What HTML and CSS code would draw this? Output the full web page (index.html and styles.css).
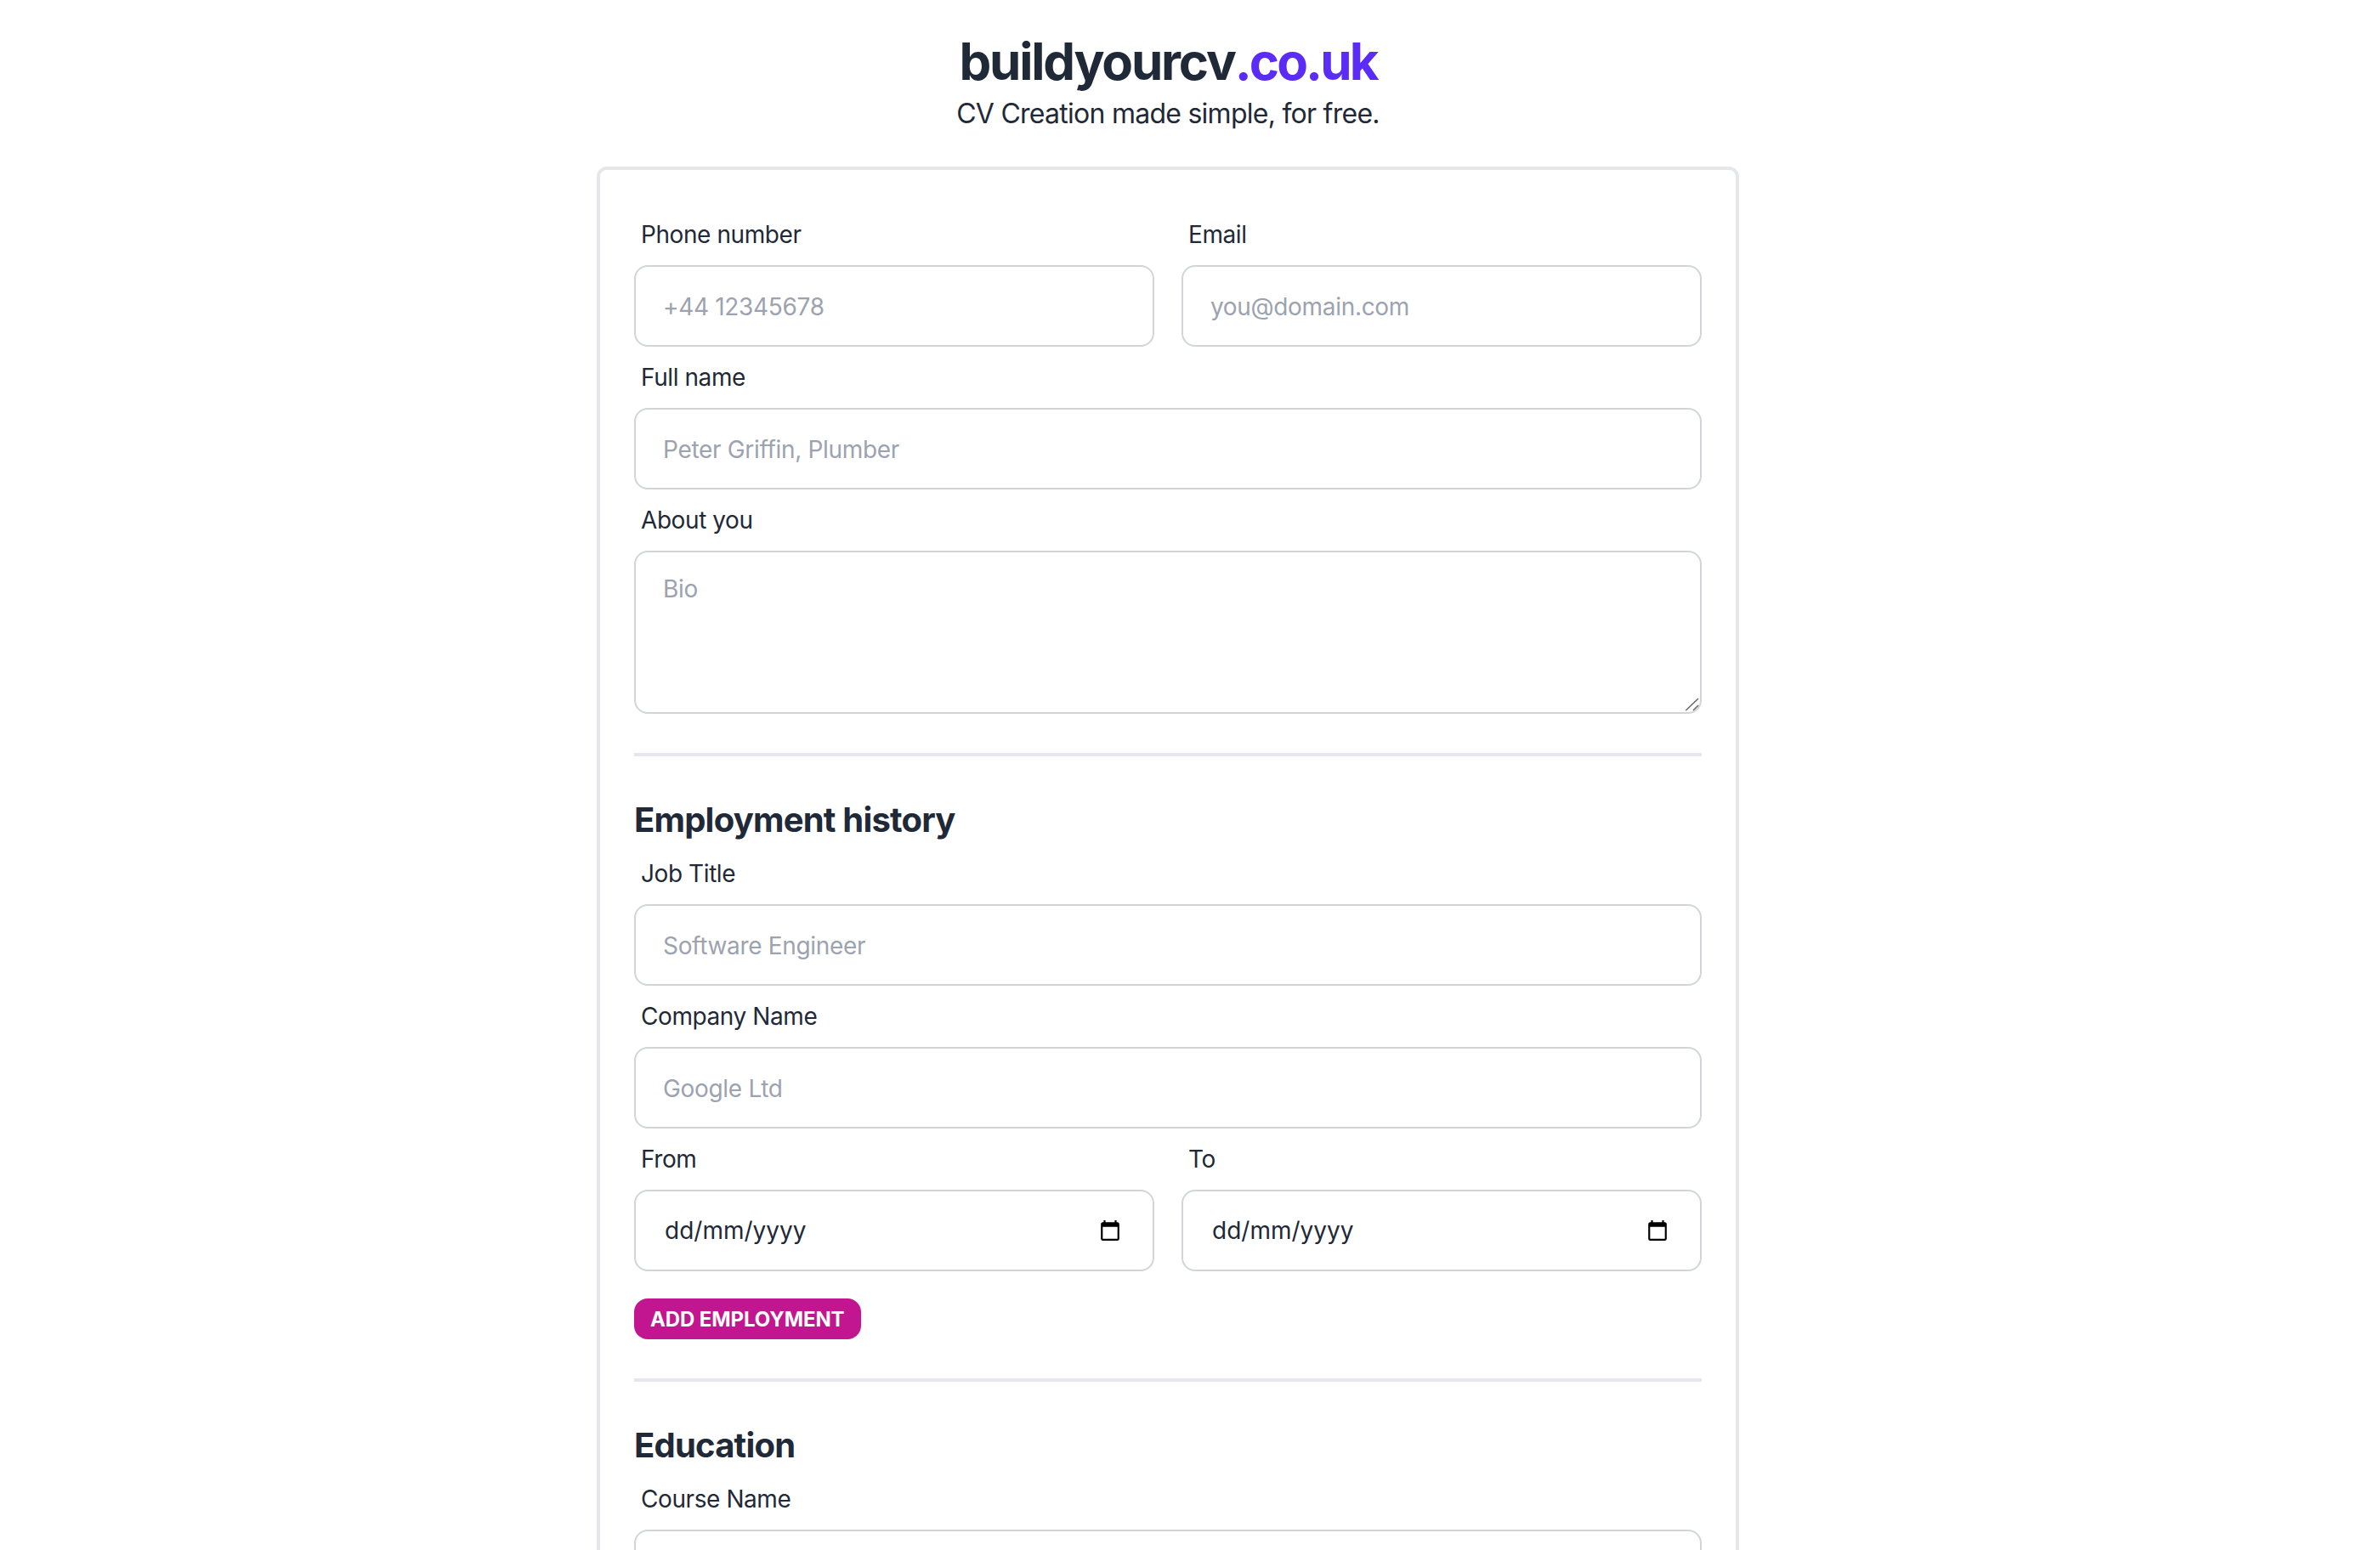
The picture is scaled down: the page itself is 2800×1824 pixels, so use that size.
FILE: index.html
```html
<!DOCTYPE html>
<html lang="en">
<head>
    <meta charset="UTF-8">
    <meta name="viewport" content="width=device-width, initial-scale=1.0">
    <title>buildyourcv.co.uk</title>
    <link rel="stylesheet" href="styles.css">
</head>
<body>

    <div class="page">
        <!-- Header -->
        <header class="header">
            <h1 class="brand">buildyourcv<span class="brand-domain">.co.uk</span></h1>
            <p class="tagline">CV Creation made simple, for free.</p>
        </header>

        <!-- Main form card -->
        <form class="card">
            <div class="field-row">
                <div class="field">
                    <label class="field-label" for="phone">Phone number</label>
                    <input class="input" id="phone" type="text" placeholder="+44 12345678">
                </div>
                <div class="field">
                    <label class="field-label" for="email">Email</label>
                    <input class="input" id="email" type="text" placeholder="you@domain.com">
                </div>
            </div>
            <div class="field">
                <label class="field-label" for="full-name">Full name</label>
                <input class="input" id="full-name" type="text" placeholder="Peter Griffin, Plumber">
            </div>
            <div class="field">
                <label class="field-label" for="bio">About you</label>
                <div class="textarea-wrap">
                    <textarea class="input textarea" id="bio" placeholder="Bio"></textarea>
                    <svg class="resize-grip" viewBox="0 0 18 18"><path d="M1.3 16L16 2M10 16l6-6"/></svg>
                </div>
            </div>

            <hr class="divider">

            <!-- Employment -->
            <h2 class="section-title">Employment history</h2>
            <div class="field">
                <label class="field-label" for="job-title">Job Title</label>
                <input class="input" id="job-title" type="text" placeholder="Software Engineer">
            </div>
            <div class="field">
                <label class="field-label" for="company">Company Name</label>
                <input class="input" id="company" type="text" placeholder="Google Ltd">
            </div>
            <div class="field-row">
                <div class="field">
                    <span class="field-label">From</span>
                    <div class="input date-input">
                        <span>dd/mm/yyyy</span>
                        <svg class="date-icon" viewBox="0 0 24 24"><path d="M20 3h-1V1h-2v2H7V1H5v2H4c-1.1 0-2 .9-2 2v16c0 1.1.9 2 2 2h16c1.1 0 2-.9 2-2V5c0-1.1-.9-2-2-2zm0 18H4V8h16v13z"/></svg>
                    </div>
                </div>
                <div class="field">
                    <span class="field-label">To</span>
                    <div class="input date-input">
                        <span>dd/mm/yyyy</span>
                        <svg class="date-icon" viewBox="0 0 24 24"><path d="M20 3h-1V1h-2v2H7V1H5v2H4c-1.1 0-2 .9-2 2v16c0 1.1.9 2 2 2h16c1.1 0 2-.9 2-2V5c0-1.1-.9-2-2-2zm0 18H4V8h16v13z"/></svg>
                    </div>
                </div>
            </div>
            <button class="add-button" type="button">Add employment</button>

            <hr class="divider">

            <!-- Education -->
            <h2 class="section-title">Education</h2>
            <div class="field">
                <label class="field-label" for="course">Course Name</label>
                <input class="input" id="course" type="text">
            </div>
        </form>
    </div>

</body>
</html>
```

FILE: styles.css
```css
html, body {
    height: 100%;
    overflow: hidden;
}

body {
    margin: 0;
    background-color: #fff;
    color: #1f2937;
    font-family: Inter, "Liberation Sans", sans-serif;
}

.page {
    width: 2748px;
    display: flex;
    flex-direction: column;
    align-items: center;
}

/* Header */
.header {
    margin-top: 36px;
    margin-bottom: 38px;
    text-align: center;
}

.brand {
    margin: 0;
    font-size: 60px;
    line-height: 72px;
    font-weight: 700;
    letter-spacing: -2.2px;
}

.brand-domain {
    color: #5a2cf6;
    letter-spacing: -2.9px;
}

.tagline {
    margin: 2px 0 0;
    font-size: 32px;
    line-height: 48px;
    letter-spacing: -0.74px;
}

/* Card */
.card {
    box-sizing: border-box;
    width: 1344px;
    flex-shrink: 0;
    padding: 40px;
    border: 4px solid #e5e7eb;
    border-radius: 12px;
}

.field-row {
    display: grid;
    grid-template-columns: 1fr 1fr;
    column-gap: 32px;
}

.field {
    display: flex;
    flex-direction: column;
}

.field-label {
    padding: 16px 8px;
    font-size: 28px;
    line-height: 40px;
    letter-spacing: -0.42px;
}

/* Inputs */
.input {
    box-sizing: border-box;
    width: 100%;
    height: 96px;
    padding: 2px 32px 0;
    border: 2px solid #d2d4d7;
    border-radius: 16px;
    background-color: #fff;
    color: #1f2937;
    font-family: inherit;
    font-size: 28px;
    line-height: 40px;
    letter-spacing: -0.32px;
    outline: none;
}

.input::placeholder {
    color: #9ca3af;
}

.textarea-wrap {
    position: relative;
}

.textarea {
    display: block;
    height: 192px;
    padding: 19px 32px 16px;
    line-height: 48px;
    resize: none;
}

.resize-grip {
    position: absolute;
    right: 2px;
    bottom: 2px;
    width: 18px;
    height: 18px;
    fill: none;
    stroke: #666;
    stroke-width: 1.5;
}

.date-input {
    display: flex;
    align-items: center;
    justify-content: space-between;
    padding: 0 37px 0 34px;
    letter-spacing: 0;
}

.date-icon {
    width: 26px;
    height: 26px;
    fill: #000;
}

/* Section parts */
.divider {
    height: 4px;
    margin: 46px 0;
    border: none;
    background-color: #e5e7eb;
}

.section-title {
    margin: 0;
    padding-top: 2px;
    font-size: 40px;
    line-height: 54px;
    font-weight: 700;
    letter-spacing: -0.8px;
}

.add-button {
    display: block;
    height: 48px;
    margin-top: 32px;
    padding: 0 19px;
    border: none;
    border-radius: 16px;
    background-color: #c1168f;
    color: #fff;
    font-family: inherit;
    font-size: 24px;
    font-weight: 700;
    letter-spacing: -0.1px;
    text-transform: uppercase;
}
```
